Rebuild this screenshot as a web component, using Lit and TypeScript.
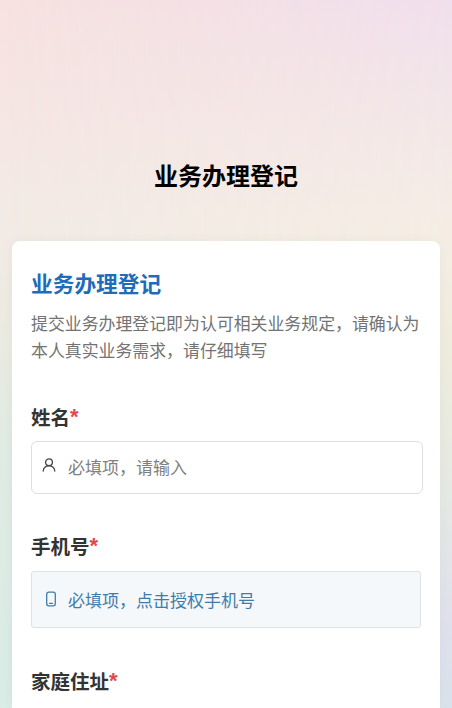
import { LitElement, html, css } from "lit";
import { customElement } from "lit/decorators.js";

@customElement("app-root")
export class AppRoot extends LitElement {
  static styles = css`
    :host {
      display: block;
      position: relative;
      width: 452px;
      height: 708px;
      overflow: hidden;
      font-family: "Liberation Sans", "Noto Sans CJK SC", sans-serif;
      background: linear-gradient(
        180deg,
        #f7e2e0 0,
        #f5e8e4 150px,
        #f2ebe5 230px,
        #ebeae1 330px,
        #dfebe3 450px,
        #d9ece6 708px
      );
    }
    :host::before {
      content: "";
      position: absolute;
      inset: 0;
      background: linear-gradient(
        180deg,
        #f0dfec 0,
        #f3e6e8 110px,
        #f5ede4 230px,
        #eeecdc 350px,
        #e5e9e3 490px,
        #dfe0ec 620px,
        #d8e2ec 708px
      );
      -webkit-mask-image: linear-gradient(90deg, transparent, #000);
      mask-image: linear-gradient(90deg, transparent, #000);
    }
    .page {
      position: relative;
      display: flex;
      flex-direction: column;
      align-items: stretch;
    }
    .nav {
      height: 241px;
      box-sizing: border-box;
      padding-top: 160px;
      text-align: center;
      font-size: 24px;
      line-height: 34px;
      font-weight: 700;
      color: #000;
    }
    .card {
      margin: 0 12px;
      background: #fff;
      border-radius: 8px 8px 0 0;
      padding: 29px 17px 0 19px;
      box-shadow: 0 0 12px rgba(0, 0, 0, 0.04);
      height: 467px;
      box-sizing: border-box;
    }
    .title {
      font-size: 21.7px;
      line-height: 30px;
      font-weight: 700;
      color: #1f6cb8;
    }
    .desc {
      margin-top: 11px;
      font-size: 16.9px;
      line-height: 27px;
      color: #737373;
      width: 392px;
    }
    .label {
      font-size: 19.5px;
      line-height: 28px;
      font-weight: 700;
      color: #333;
      display: flex;
    }
    .star {
      color: #e0494f;
      font-size: 22px;
      line-height: 25px;
      font-weight: 700;
      font-family: "Liberation Sans", sans-serif;
    }
    .f1 { margin-top: 39px; }
    .f2 { margin-top: 39px; }
    .f3 { margin-top: 40px; }
    .box {
      box-sizing: border-box;
      display: flex;
      align-items: center;
      font-size: 17px;
    }
    .input {
      margin-top: 9px;
      height: 53px;
      width: 392px;
      border: 1.5px solid #dedede;
      border-radius: 6px;
      background: #fff;
      color: #808080;
      padding: 0 0 2px 10px;
    }
    .phone {
      margin-top: 10px;
      height: 57px;
      width: 390px;
      border: 1.5px solid #e0e2e2;
      border-radius: 3px;
      background: #f4f8fa;
      color: #3f7cac;
      padding-left: 12.5px;
    }
    svg {
      flex: none;
      fill: none;
      stroke: currentColor;
      stroke-linecap: round;
      stroke-linejoin: round;
    }
    .input svg { color: #444; margin-right: 12px; margin-top: -4px; }
    .phone svg { margin-right: 11.5px; margin-top: -1px; }
  `;

  render() {
    return html`
      <div class="page">
        <div class="nav">业务办理登记</div>
        <div class="card">
          <div class="title">业务办理登记</div>
          <div class="desc">提交业务办理登记即为认可相关业务规定，请确认为本人真实业务需求，请仔细填写</div>
          <div class="label f1">姓名<span class="star">*</span></div>
          <div class="box input">
            <svg width="14" height="14" viewBox="0 0 14 14" stroke-width="1.3">
              <circle cx="7" cy="4.3" r="3.4"></circle>
              <path d="M1.2 13c.3-3 2.6-5.2 5.8-5.2s5.5 2.2 5.8 5.2"></path>
            </svg>
            <span>必填项，请输入</span>
          </div>
          <div class="label f2">手机号<span class="star">*</span></div>
          <div class="box phone">
            <svg width="12" height="16" viewBox="0 0 12 16" stroke-width="1.3">
              <rect x="1.7" y="1.2" width="8.6" height="13.6" rx="2"></rect>
              <path d="M4.6 12.4h2.8"></path>
            </svg>
            <span>必填项，点击授权手机号</span>
          </div>
          <div class="label f3">家庭住址<span class="star">*</span></div>
        </div>
      </div>
    `;
  }
}
